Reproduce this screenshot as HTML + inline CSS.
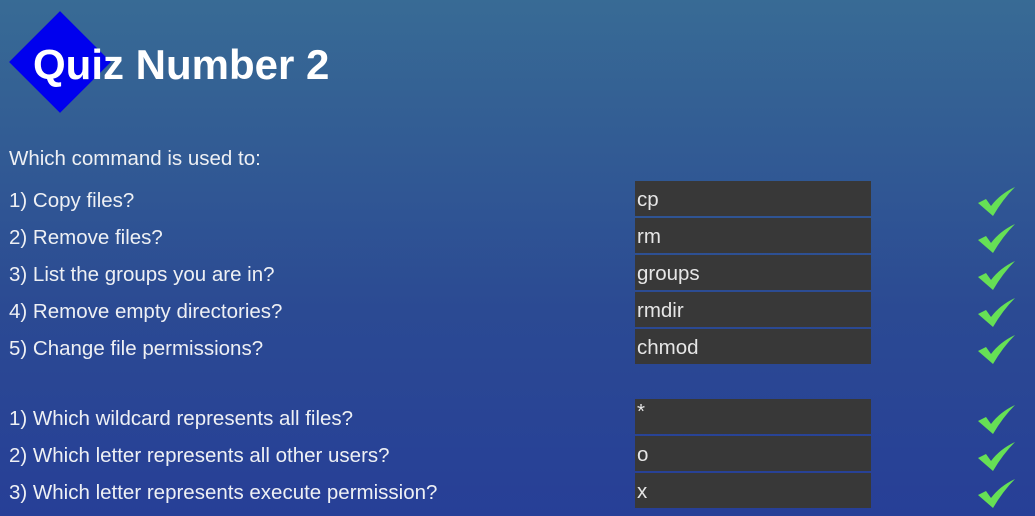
<!DOCTYPE html>
<html><head><style>
body{margin:0;width:1035px;height:516px;overflow:hidden;background:linear-gradient(#386b95,#2b4a93 60%,#273f97);font-family:"Liberation Sans",sans-serif;color:#eef0f4;position:relative}
.d{position:absolute;left:24px;top:26px;width:72px;height:72px;background:#0000ee;transform:rotate(45deg)}
h1{position:absolute;left:33px;top:42px;margin:0;font-size:42px;font-weight:bold;color:#fff;line-height:46px}
.t{position:absolute;left:9px;font-size:20.5px;line-height:24px}
.b{position:absolute;left:635px;width:236px;height:35px;background:#383838;box-sizing:border-box;padding-left:2px;font-size:20.5px;line-height:38px;color:#e6e6e6}
svg{position:absolute;left:978px}
</style></head><body>
<div class="d"></div>
<h1>Quiz Number 2</h1>
<div class="t" style="top:147px">Which command is used to:</div>
<div class="t" style="top:189px">1) Copy files?</div>
<div class="t" style="top:226px">2) Remove files?</div>
<div class="t" style="top:263px">3) List the groups you are in?</div>
<div class="t" style="top:300px">4) Remove empty directories?</div>
<div class="t" style="top:337px">5) Change file permissions?</div>
<div class="t" style="top:407px">1) Which wildcard represents all files?</div>
<div class="t" style="top:444px">2) Which letter represents all other users?</div>
<div class="t" style="top:481px">3) Which letter represents execute permission?</div>
<div class="b" style="top:181px">cp</div>
<div class="b" style="top:218px">rm</div>
<div class="b" style="top:255px">groups</div>
<div class="b" style="top:292px">rmdir</div>
<div class="b" style="top:329px">chmod</div>
<div class="b" style="top:399px;line-height:26px">*</div>
<div class="b" style="top:436px">o</div>
<div class="b" style="top:473px">x</div>
<svg width="0" height="0"><defs><path id="c" d="M0 16 L8 12 L13 19 Q22 7 37 0 Q25 12 15 29 Z" fill="#66e055"/></defs></svg>
<svg style="top:187px" width="38" height="30"><use href="#c"/></svg>
<svg style="top:224px" width="38" height="30"><use href="#c"/></svg>
<svg style="top:261px" width="38" height="30"><use href="#c"/></svg>
<svg style="top:298px" width="38" height="30"><use href="#c"/></svg>
<svg style="top:335px" width="38" height="30"><use href="#c"/></svg>
<svg style="top:405px" width="38" height="30"><use href="#c"/></svg>
<svg style="top:442px" width="38" height="30"><use href="#c"/></svg>
<svg style="top:479px" width="38" height="30"><use href="#c"/></svg>
</body></html>
